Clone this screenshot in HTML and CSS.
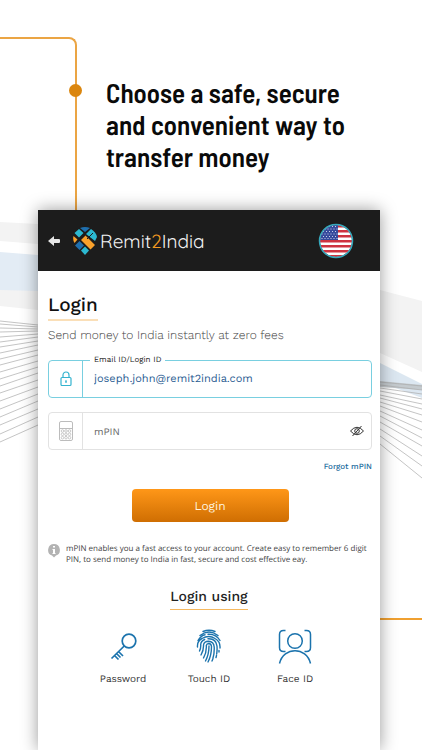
FILE: index.html
```html
<!DOCTYPE html>
<html lang="en">
<head>
    <meta charset="utf-8">
    <meta name="viewport" content="width=device-width, initial-scale=1">
    <title>Login - Remit2India</title>
    <link rel="stylesheet" href="styles.css">
</head>
<body>
    <div class="page">
        <svg class="deco deco-left" viewBox="0 0 38 240" width="38" height="240" aria-hidden="true">
            <path fill="#f3f3f3" d="M0 12l38 2v20L0 31zM0 80h38v20L0 96z"/>
            <path fill="#e3ecf5" d="M0 42l38 3v36L0 80z"/>
            <path class="strand" d="M0 111l38 4M0 114l38 3M0 118l38 1M0 122l38-1M0 127l38-3M0 132l38-5M0 137l38-6M0 143l38-8M0 149l38-9M0 155l38-10M0 162l38-11M0 169l38-12M0 176l38-13M0 183l38-13M0 191l38-14M0 199l38-15M0 207l38-16M0 215l38-16M0 224l38-17M0 232l38-17"/>
        </svg>
        <svg class="deco deco-right" viewBox="0 0 42 230" width="42" height="230" aria-hidden="true">
            <path fill="#f3f3f3" d="M0 30l42 11v71L0 93z"/>
            <path fill="#dce7f1" d="M0 103l42 21v14L0 122z"/>
            <path fill="#c4cace" d="M0 121l42 4v5L0 127z"/>
            <path class="strand" d="M0 122l42 4M0 125l42 5M0 128l42 6M0 131l42 8M0 135l42 9M0 138l42 11M0 142l42 13M0 146l42 16M0 151l42 19M0 156l42 22M0 162l42 24M0 169l42 27M0 176l42 30M0 184l42 34"/>
        </svg>
        <div class="rail"></div>
        <div class="rail-dot"></div>
        <div class="rail-right"></div>

        <h1 class="headline">Choose a safe, secure<br>and convenient way to<br>transfer money</h1>

        <main class="card">
            <header class="topbar">
                <button class="icon-button" type="button" aria-label="Back">
                    <svg width="12" height="10" viewBox="0 0 12 10"><path fill="#e6e6e6" d="M0 5l6-5v3h5q1 0 1 1v2q0 1-1 1H6v3z"/></svg>
                </button>
                <a class="brand" href="#">
                    <svg width="24" height="28" viewBox="0 0 24 28" aria-hidden="true">
                        <path fill="#1f6fae" d="M7 1q5-2 10 0l-5 4z"/>
                        <path fill="#2cb9d1" d="M6 2l4.500 4L6 10.500 1.500 6zM18 2q5 3 6 8l-2 4-9-7z"/>
                        <path fill="#f9a12b" d="M.5 9l4 3.500-3 3.500q-2-3-1-7zM12.500 8.500L22 18l-4.500 4.500L8 13z"/>
                        <path fill="#1f6fae" d="M6.500 14l4.500 4.500L6.500 23 2 18.500z"/>
                        <path fill="#2cb9d1" d="M12 19.500l4 4-4 4.500-4-4.500z"/>
                        <path stroke="#1c1c1c" d="M14 12l6-6"/>
                    </svg>
                    <span class="brand-name">Remit<b>2</b>India</span>
                </a>
                <button class="icon-button" type="button" aria-label="Country: United States">
                    <svg width="36" height="36" viewBox="0 0 36 36">
                        <clipPath id="flag"><circle cx="18" cy="18" r="16"/></clipPath>
                        <g clip-path="url(#flag)">
                            <path fill="#fff" d="M0 0h36v36H0z"/>
                            <path stroke="#ce3340" stroke-width="2.5" d="M0 3.300h36M0 8.300h36M0 13.300h36M0 18.300h36M0 23.300h36M0 28.300h36M0 33.300h36"/>
                            <path fill="#374a9c" d="M0 0h20v17H0z"/>
                            <path stroke="#c9d0ea" stroke-width="1" stroke-dasharray="1 2" d="M2 3.500h18M3.500 6h16M2 8.500h18M3.500 11h16M2 13.500h18M3.500 15.500h16"/>
                        </g>
                        <circle cx="18" cy="18" r="16.500" fill="none" stroke="#35a9bd" stroke-width="1.500"/>
                    </svg>
                </button>
            </header>

            <form class="login">
                <h2 class="title">Login</h2>
                <p class="subtitle">Send money to India instantly at zero fees</p>

                <div class="field field-active">
                    <label class="field-label" for="email">Email ID/Login ID</label>
                    <span class="field-icon">
                        <svg width="12" height="16" viewBox="0 0 12 16" fill="none" stroke="#35b4cf" stroke-width="1.200">
                            <rect x="1" y="6.500" width="10" height="8" rx="1"/><path d="M3 6.500V4a3 3 0 0 1 6 0v2.500M6 9.500v2.500M5 10h2"/>
                        </svg>
                    </span>
                    <input type="email" id="email" name="email" value="joseph.john@remit2india.com">
                </div>

                <div class="field">
                    <span class="field-icon">
                        <svg width="14" height="20" viewBox="0 0 14 20" fill="none" stroke="#bcbcbc">
                            <rect x=".5" y=".5" width="13" height="19" rx="1.500"/>
                            <path d="M1 7.500h12"/>
                            <g stroke-width=".8"><circle cx="3.500" cy="10" r="1.300"/><circle cx="7" cy="10" r="1.300"/><circle cx="10.500" cy="10" r="1.300"/><circle cx="3.500" cy="13.300" r="1.300"/><circle cx="7" cy="13.300" r="1.300"/><circle cx="10.500" cy="13.300" r="1.300"/><circle cx="3.500" cy="16.700" r="1.300"/><circle cx="7" cy="16.700" r="1.300"/><circle cx="10.500" cy="16.700" r="1.300"/></g>
                        </svg>
                    </span>
                    <input type="password" id="mpin" name="mpin" placeholder="mPIN" aria-label="mPIN">
                    <button class="icon-button reveal" type="button" aria-label="Show mPIN">
                        <svg width="14" height="12" viewBox="0 0 14 12" fill="none" stroke="#333">
                            <path d="M.5 6Q7-1.500 13.500 6 7 13.500.5 6zM2.500 11L11.500 1"/><circle cx="7" cy="6" r="2.300"/>
                        </svg>
                    </button>
                </div>

                <a class="forgot" href="#">Forgot mPIN</a>
                <button class="submit" type="submit">Login</button>

                <div class="note">
                    <svg width="12" height="14" viewBox="0 0 12 14" aria-hidden="true">
                        <path fill="#b3b3b3" d="M6 0a6 6 0 0 1 2 11.600L6 13.500l-2-1.900A6 6 0 0 1 6 0z"/>
                        <path fill="#fff" d="M5 2h2v1.500H5zM4.500 5H7v4h.5v1h-3V9H5V6h-.5z"/>
                    </svg>
                    <p>mPIN enables you a fast access to your account. Create easy to remember 6 digit PIN, to send money to India in fast, secure and cost effective eay.</p>
                </div>
            </form>

            <section class="methods">
                <h3 class="methods-title">Login using</h3>
                <div class="method-list">
                    <a class="method" href="#">
                        <svg width="28" height="36" viewBox="0 0 28 36" fill="none" stroke="#1b73ad" stroke-width="1.700">
                            <circle cx="20" cy="12" r="6.800"/><path d="M15.200 17L2.500 29.500M5.500 26.500l4 4M9.500 22.500l4.500 4.500M7.500 24.500l4 4"/>
                        </svg>
                        Password
                    </a>
                    <a class="method" href="#">
                        <svg width="26" height="36" viewBox="0 0 26 36" fill="none" stroke="#1b73ad" stroke-width="1.400" stroke-linecap="round">
                            <path d="M7 2.500q6-2.500 12 0M4 6.500q9-7 18 0M2 11.500q3-5 7-5.800M12 5.300q8-.5 12 6.200M1.500 18q-.5-6 4.500-8.500 7-4 13 0 5.500 3 5 9.500M3.500 22q1.500-3 1.200-6.500.3-3.500 4-5M12 9.800q8-.5 9 7.200.3 4-.3 8M5 26q2.800-5 2.500-10 .5-3.500 5-3.700 5.300.2 5.700 5.700.3 6-1.200 11M7.500 29q3.300-6 2.800-12.500.5-2 2.500-2 2.500.3 2.700 3 0 9-3.500 15.500M9.500 32q3.500-6.500 3.500-15M16 32l1-2.500M20 28.500l.5-2M23 23v-1.500"/>
                        </svg>
                        Touch ID
                    </a>
                    <a class="method" href="#">
                        <svg width="34" height="36" viewBox="0 0 34 36" fill="none" stroke="#1b73ad" stroke-width="1.500">
                            <circle cx="17" cy="12" r="7.300"/><path d="M7.500 1.500h-2q-4 0-4 4v13q0 4 4 4h2M26.500 1.500h2q4 0 4 4v13q0 4-4 4h-2M1.500 34.500c4-17 27-17 31 0"/>
                        </svg>
                        Face ID
                    </a>
                </div>
            </section>
        </main>
    </div>
</body>
</html>
```

FILE: styles.css
```css
* {
    box-sizing: border-box;
}
body {
    margin: 0;
    background-color: #fff;
    color: #222;
    font-family: "Work Sans", Inter, "Open Sans", sans-serif;
    text-rendering: geometricPrecision;
}
h1, h2, h3, p {
    margin: 0;
}
a {
    text-decoration: none;
}
svg {
    display: block;
}
.page {
    position: relative;
    display: flex;
    flex-direction: column;
    min-height: 100vh;
    padding: 77px 42px 0 38px;
    overflow: hidden;
}

/* background artwork */
.deco {
    position: absolute;
}
.deco-left {
    top: 210px;
    left: 0;
}
.deco-right {
    top: 260px;
    right: 0;
}
.strand {
    fill: none;
    stroke: #aaa;
    stroke-width: 0.7;
}
.rail {
    position: absolute;
    top: 37px;
    left: 0;
    width: 77px;
    height: 180px;
    border: 2px solid #eba544;
    border-width: 2px 2px 0 0;
    border-top-right-radius: 8px;
}
.rail-dot {
    position: absolute;
    top: 84px;
    left: 69px;
    width: 13px;
    height: 13px;
    border-radius: 50%;
    background-color: #db860e;
}
.rail-right {
    position: absolute;
    top: 618px;
    right: 0;
    width: 42px;
    height: 2px;
    background-color: #f0a030;
}

.headline {
    padding-left: 68px;
    font-family: "Barlow Semi Condensed", "Barlow Condensed", "Liberation Sans Narrow", sans-serif;
    font-size: 27px;
    font-weight: 600;
    line-height: 32px;
    color: #0a0a0a;
}

/* login card */
.card {
    position: relative;
    flex: 1;
    margin-top: 37px;
    background-color: #fff;
    box-shadow: 0 0 16px rgba(0, 0, 0, 0.4);
}
.topbar {
    display: flex;
    align-items: center;
    height: 61px;
    padding: 0 26px 0 10px;
    background-color: #1c1c1c;
}
.icon-button {
    padding: 0;
    border: none;
    background: none;
    cursor: pointer;
}
.brand {
    display: flex;
    align-items: center;
    gap: 3px;
    margin: 0 auto 0 13px;
}
.brand-name {
    font-family: Quicksand, Comfortaa, Lato, sans-serif;
    font-size: 19px;
    font-weight: 400;
    color: #f2f2f2;
}
.brand-name b {
    font-weight: 400;
    color: #f39a20;
}
.login {
    display: flex;
    flex-direction: column;
    padding: 22px 8px 0 10px;
}
.title {
    align-self: flex-start;
    padding-bottom: 3px;
    border-bottom: 2px solid #fadfb8;
    font-size: 19px;
    font-weight: 500;
    line-height: 23px;
    color: #111;
}
.subtitle {
    margin-top: 6px;
    font-size: 12px;
    font-weight: 300;
    line-height: 16px;
    color: #444;
}
.field {
    position: relative;
    display: flex;
    align-items: center;
    height: 38px;
    margin-top: 14px;
    border: 1px solid #e2e2e2;
    border-radius: 4px;
}
.field-active {
    margin-top: 17px;
    border-color: #79cfe0;
}
.field-label {
    position: absolute;
    top: -7px;
    left: 41px;
    padding: 0 4px;
    background-color: #fff;
    font-size: 8px;
    font-weight: 400;
    line-height: 12px;
}
.field-icon {
    display: flex;
    align-items: center;
    justify-content: center;
    width: 34px;
    height: 100%;
    border-right: 1px solid #e2e2e2;
}
.field-active .field-icon {
    border-color: #79cfe0;
}
.field input {
    flex: 1;
    min-width: 0;
    padding: 0 11px;
    border: none;
    outline: none;
    background: none;
    font-family: inherit;
    font-size: 11px;
    text-rendering: inherit;
    color: #2a5c92;
}
.field-active input {
    padding-bottom: 2px;
}
.field input::placeholder {
    font-size: 10px;
    color: #666;
}
.reveal {
    margin-right: 7px;
}
.forgot {
    align-self: flex-end;
    margin-top: 11px;
    font-size: 8px;
    font-weight: 500;
    line-height: 12px;
    color: #1b6c9e;
}
.submit {
    align-self: center;
    width: 157px;
    height: 33px;
    margin-top: 16px;
    border: none;
    border-radius: 4px;
    background: linear-gradient(#ff9718, #cf6e02);
    font-family: inherit;
    font-size: 12px;
    text-rendering: inherit;
    color: #fff3df;
    cursor: pointer;
}
.note {
    display: flex;
    align-items: flex-start;
    gap: 6px;
    margin-top: 21px;
    font-family: "Open Sans", sans-serif;
    font-size: 8px;
    line-height: 11px;
    color: #444;
}
.note svg {
    flex: none;
    margin-top: 1px;
}
.methods {
    display: flex;
    flex-direction: column;
    align-items: center;
    padding-top: 24px;
}
.methods-title {
    padding-bottom: 3px;
    border-bottom: 1px solid #f5b85f;
    font-size: 14px;
    font-weight: 500;
    line-height: 17px;
}
.method-list {
    display: grid;
    grid-template-columns: repeat(3, 86px);
    margin-top: 19px;
}
.method {
    display: flex;
    flex-direction: column;
    align-items: center;
    gap: 8px;
    font-size: 10px;
    line-height: 14px;
    color: #333;
}
```
